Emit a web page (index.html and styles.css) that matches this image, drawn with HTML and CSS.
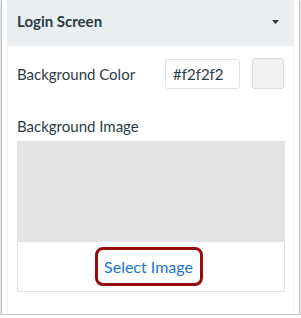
FILE: index.html
```html
<!DOCTYPE html>
<html>
<head>
<meta charset="utf-8">
<link rel="stylesheet" href="styles.css">
</head>
<body>
<div class="frame">
  <div class="panel">
    <div class="panel-header">
      <span class="panel-title">Login Screen</span>
      <svg class="caret" width="7" height="4" viewBox="0 0 7 4"><path d="M0 0H7L3.5 4Z" fill="#2d3b45"/></svg>
    </div>
    <div class="panel-body">
      <div class="row">
        <span class="label">Background Color</span>
        <div class="color-input">#f2f2f2</div>
        <div class="swatch"></div>
      </div>
      <div class="label label-image">Background Image</div>
      <div class="image-box">
        <div class="image-preview"></div>
        <div class="image-actions">
          <span class="select-btn">Select Image</span>
        </div>
      </div>
    </div>
  </div>
</div>
</body>
</html>
```
FILE: styles.css
```css
html, body {
  margin: 0;
  padding: 0;
  background: #ffffff;
}
body {
  font-family: Lato, "Open Sans", sans-serif;
  color: #2d3b45;
}
.frame {
  margin-left: 1px;
  height: 314px;
  border: 1px solid #c6c6c6;
  border-top: none;
  box-shadow: 0 1px 2px rgba(0,0,0,0.35);
  padding: 0 4px 0 5px;
  box-sizing: content-box;
  width: 288px;
}
.panel {
  width: 287px;
  height: 314px;
  border-left: 1px solid #f3f3f3;
  border-right: 1px solid #f3f3f3;
  box-sizing: border-box;
}
.panel-header {
  height: 46px;
  background: #ebeef0;
  display: flex;
  align-items: center;
  justify-content: space-between;
  padding: 0 15px 0 9px;
  box-sizing: border-box;
  margin-left: -1px;
  margin-right: -1px;
}
.panel-title {
  font-weight: 700;
  font-size: 15px;
  position: relative;
  top: -2px;
  left: 1px;
}
.caret {
  display: block;
  position: relative;
  top: -1px;
}
.panel-body {
  padding: 13px 9px 0 9px;
}
.row {
  display: flex;
  align-items: center;
  height: 30px;
}
.label {
  font-size: 15px;
  flex: 1;
}
.color-input {
  width: 75px;
  height: 30px;
  box-sizing: border-box;
  border: 1px solid #dfe2e5;
  border-radius: 3px;
  font-size: 15px;
  padding: 0 0 0 7px;
  display: flex;
  align-items: center;
  color: #2d3b45;
}
.swatch {
  width: 32px;
  height: 31px;
  margin-left: 12px;
  margin-top: -1px;
  box-sizing: border-box;
  background: #f2f2f2;
  border: 1px solid #dcdcdc;
  border-radius: 3px;
}
.label-image {
  margin-top: 28px;
  line-height: 18px;
}
.image-box {
  margin-top: 6px;
  width: 268px;
  border: 1px solid #e3e3e3;
  border-top: none;
  box-sizing: border-box;
}
.image-preview {
  height: 101px;
  background: #e4e4e4;
  margin: 0 -1px;
}
.image-actions {
  height: 49px;
  display: flex;
  align-items: center;
  justify-content: center;
}
.select-btn {
  display: flex;
  align-items: center;
  justify-content: center;
  width: 108px;
  height: 39px;
  box-sizing: border-box;
  border: 3px solid #960b0b;
  border-radius: 8px;
  color: #1f74c9;
  font-size: 16px;
  margin-left: -5px;
}
```
